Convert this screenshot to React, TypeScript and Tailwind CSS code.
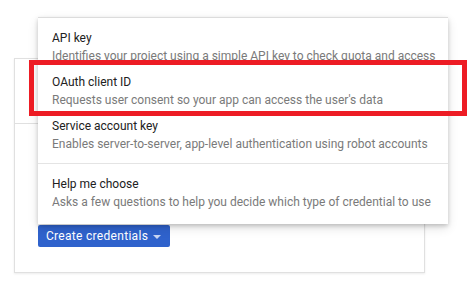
const MENU_ITEMS = [
  { title: 'API key', desc: 'Identifies your project using a simple API key to check quota and access' },
  { title: 'OAuth client ID', desc: "Requests user consent so your app can access the user's data" },
  { title: 'Service account key', desc: 'Enables server-to-server, app-level authentication using robot accounts' },
];

const HELP_ITEM = {
  title: 'Help me choose',
  desc: 'Asks a few questions to help you decide which type of credential to use',
};

function MenuRow({ title, desc }: { title: string; desc: string }) {
  return (
    <div className="px-[14px] py-[4px] whitespace-nowrap">
      <p className="text-[12px] leading-[18px] text-[#212121]">{title}</p>
      <p className="text-[12px] leading-[18px] text-[#7a7a7a]">{desc}</p>
    </div>
  );
}

export default function App() {
  return (
    <div
      className="relative h-[291px] w-[473px] overflow-hidden bg-white pl-[14px] pt-[58px]"
      style={{ fontFamily: 'Roboto, "Liberation Sans", sans-serif' }}
    >
      {/* ── Credentials card ── */}
      <div className="h-[215px] w-[411px] border border-[#e0e0e0] bg-white shadow-[0_1px_2px_rgba(0,0,0,0.08)]">
        <div className="h-[65px] border-b border-[#e0e0e0]" />
        <div className="pl-[23px] pt-[101px]">
          <button className="flex h-[22px] w-[132px] items-center justify-between rounded-[2px] bg-[#2f62cc] pl-[8px] pr-[9px] text-[12px] tracking-[0.3px] text-white">
            <span>Create credentials</span>
            <svg width="8" height="4" viewBox="0 0 8 4" className="mt-[1px]">
              <path d="M0 0h8L4 4z" fill="#c9d6f3" />
            </svg>
          </button>
        </div>
      </div>

      {/* ── Dropdown menu ── */}
      <div className="absolute left-[38px] top-[17px] w-[410px] border-t border-[#dcdcdc] bg-white pb-[9px] pt-[7px] shadow-[0_2px_4px_rgba(0,0,0,0.18),0_4px_10px_rgba(0,0,0,0.12)]">
        {MENU_ITEMS.map((item) => (
          <MenuRow key={item.title} {...item} />
        ))}
        <div className="my-[6px] h-px bg-[#e4e4e4]" />
        <div className="pt-px">
          <MenuRow {...HELP_ITEM} />
        </div>
      </div>

      {/* ── Highlight ── */}
      <div className="absolute left-[29px] top-[60px] h-[56px] w-[438px] border-[5px] border-[#ed1c24]" />
    </div>
  );
}
